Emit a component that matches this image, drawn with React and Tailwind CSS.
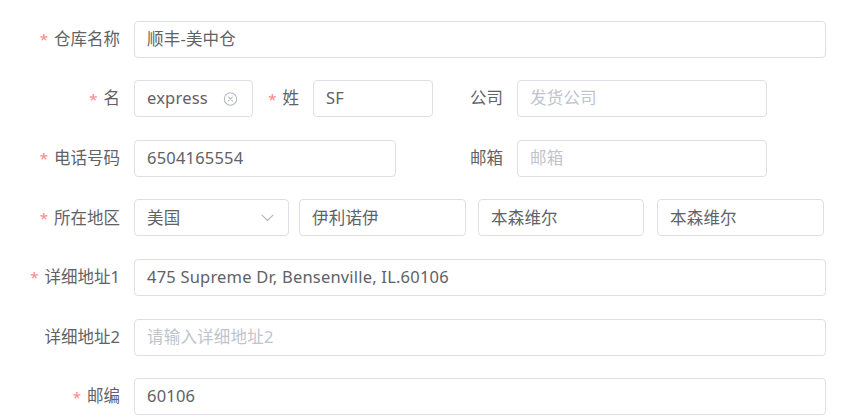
import React from 'react';

const font = { fontFamily: '"Noto Sans", "Noto Sans CJK SC", sans-serif' };

const Label = ({ text, required, className = '' }) => (
  <div className={`flex items-center justify-end pr-[14px] text-[16.5px] text-[#606266] whitespace-nowrap ${className}`}>
    {required && <span className="text-[#f78989] mr-[6px] text-[15px]">*</span>}
    <span>{text}</span>
  </div>
);

const Field = ({ value, placeholder, className = '', children }) => (
  <div className={`relative flex items-center h-full border border-[#dcdfe6] rounded-[4px] bg-white pl-[12px] pr-[12px] text-[16.5px] tracking-[0.2px] ${className}`}>
    {value ? (
      <span className="text-[#606266] whitespace-nowrap">{value}</span>
    ) : (
      <span className="text-[#c0c4cc] whitespace-nowrap">{placeholder}</span>
    )}
    {children}
  </div>
);

const ClearIcon = () => (
  <svg className="absolute right-[14px] top-1/2 -translate-y-1/2" width="15" height="15" viewBox="0 0 16 16" fill="none">
    <circle cx="8" cy="8" r="6.6" stroke="#b4b8bf" strokeWidth="1.1" />
    <path d="M5.9 5.9 L10.1 10.1 M10.1 5.9 L5.9 10.1" stroke="#b4b8bf" strokeWidth="1.1" strokeLinecap="round" />
  </svg>
);

const Chevron = () => (
  <svg className="absolute right-[14px] top-1/2 -translate-y-1/2" width="13" height="8" viewBox="0 0 13 8" fill="none">
    <path d="M1 1.2 L6.5 6.5 L12 1.2" stroke="#b4b8bf" strokeWidth="1.1" strokeLinecap="round" strokeLinejoin="round" />
  </svg>
);

export default function App() {
  return (
    <div className="w-[843px] h-[420px] bg-white overflow-hidden pt-[20.7px]" style={font}>
      <div className="flex flex-col gap-[22.6px]">
        <div className="flex h-[37px]">
          <Label text="仓库名称" required className="w-[134px]" />
          <Field value="顺丰-美中仓" className="w-[692px]" />
        </div>

        <div className="flex h-[37px]">
          <Label text="名" required className="w-[134px]" />
          <Field value="express" className="w-[119px]">
            <ClearIcon />
          </Field>
          <Label text="姓" required className="w-[60px]" />
          <Field value="SF" className="w-[120px]" />
          <Label text="公司" className="w-[84px]" />
          <Field placeholder="发货公司" className="w-[250px]" />
        </div>

        <div className="flex h-[37px]">
          <Label text="电话号码" required className="w-[134px]" />
          <Field value="6504165554" className="w-[262px]" />
          <Label text="邮箱" className="w-[121px]" />
          <Field placeholder="邮箱" className="w-[250px]" />
        </div>

        <div className="flex h-[37px]">
          <Label text="所在地区" required className="w-[134px]" />
          <Field value="美国" className="w-[155px]">
            <Chevron />
          </Field>
          <Field value="伊利诺伊" className="w-[167px] ml-[10px]" />
          <Field value="本森维尔" className="w-[166px] ml-[12px]" />
          <Field value="本森维尔" className="w-[167px] ml-[13px]" />
        </div>

        <div className="flex h-[37px]">
          <Label text="详细地址1" required className="w-[134px]" />
          <Field value="475 Supreme Dr, Bensenville, IL.60106" className="w-[692px]" />
        </div>

        <div className="flex h-[37px]">
          <Label text="详细地址2" className="w-[134px]" />
          <Field placeholder="请输入详细地址2" className="w-[692px]" />
        </div>

        <div className="flex h-[37px]">
          <Label text="邮编" required className="w-[134px]" />
          <Field value="60106" className="w-[692px]" />
        </div>
      </div>
    </div>
  );
}
